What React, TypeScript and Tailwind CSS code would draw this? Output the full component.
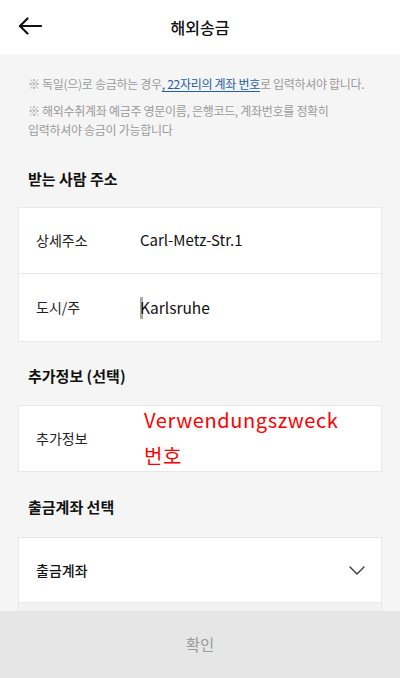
import React, { useState } from 'react';

const font = { fontFamily: '"Noto Sans CJK KR", "Noto Sans", sans-serif' };

const BackArrow: React.FC = () => (
  <svg width="24" height="18" viewBox="0 0 24 18" fill="none" stroke="#111" strokeWidth="2.2" strokeLinecap="round" strokeLinejoin="round">
    <path d="M23 9H2" />
    <path d="M9.5 1.5L2 9l7.5 7.5" />
  </svg>
);

const Chevron: React.FC = () => (
  <svg width="16" height="9" viewBox="0 0 16 9" fill="none" stroke="#333" strokeWidth="1.3" strokeLinecap="round" strokeLinejoin="round">
    <path d="M1 1l7 7 7-7" />
  </svg>
);

const App: React.FC = () => {
  const [street, setStreet] = useState('Carl-Metz-Str.1');
  const [city, setCity] = useState('Karlsruhe');

  return (
    <div className="flex flex-col w-[400px] h-[678px] overflow-hidden bg-[#f5f5f5]" style={font}>
      <header className="relative flex items-center justify-center h-[54px] shrink-0 bg-white">
        <button className="absolute left-[18px] top-[17px]">
          <BackArrow />
        </button>
        <h1 className="text-[16px] font-medium text-[#111] leading-none">해외송금</h1>
      </header>

      <main className="flex-1 overflow-hidden">
        <div className="px-[28px] pt-[20px] text-[12px] leading-[19px] text-[#9a9a9a] tracking-[-0.3px]">
          <p className="mb-[8px] whitespace-nowrap">
            ※ 독일(으)로 송금하는 경우
            <a href="#" className="text-[#1d5fa6] underline underline-offset-2">, 22자리의 계좌 번호</a>
            로 입력하셔야 합니다.
          </p>
          <p>
            ※ 해외수취계좌 예금주 영문이름, 은행코드, 계좌번호를 정확히
            <br />
            입력하셔야 송금이 가능합니다
          </p>
        </div>

        <h2 className="mt-[29px] px-[28px] text-[15px] leading-[22px] font-bold text-[#111]">받는 사람 주소</h2>
        <div className="mx-[18px] mt-[17px] bg-white border border-[#e8e8e8]">
          <div className="flex items-center h-[66px] border-b border-[#e8e8e8]">
            <span className="w-[121px] pl-[17px] text-[14px] text-[#222]">상세주소</span>
            <input
              value={street}
              onChange={(e) => setStreet(e.target.value)}
              className="flex-1 text-[15px] text-[#111] outline-none bg-transparent"
            />
          </div>
          <div className="flex items-center h-[67px]">
            <span className="w-[121px] pl-[17px] text-[14px] text-[#222]">도시/주</span>
            <div className="flex items-center flex-1">
              <span className="w-[3px] h-[22px] bg-[#aaa] -mr-[3px]" />
              <input
                value={city}
                onChange={(e) => setCity(e.target.value)}
                className="flex-1 text-[15.5px] text-[#111] outline-none bg-transparent"
              />
            </div>
          </div>
        </div>

        <h2 className="mt-[23px] px-[28px] text-[15px] leading-[22px] font-bold text-[#111]">추가정보 (선택)</h2>
        <div className="mx-[18px] mt-[18px] h-[67px] flex items-center bg-white border border-[#e8e8e8]">
          <span className="w-[125px] pl-[17px] text-[14px] text-[#222]">추가정보</span>
          <p className="text-[20px] leading-[36px] tracking-[0.6px] text-[#ff0000] -mt-[1px]">
            Verwendungszweck
            <br />
            번호
          </p>
        </div>

        <h2 className="mt-[24px] px-[28px] text-[15px] leading-[22px] font-bold text-[#111]">출금계좌 선택</h2>
        <div className="mx-[18px] mt-[19px] bg-white border border-[#e8e8e8]">
          <button className="flex items-center justify-between w-full h-[65px] pl-[17px] pr-[16px] border-b border-[#e8e8e8]">
            <span className="text-[14px] font-medium text-[#111]">출금계좌</span>
            <Chevron />
          </button>
          <div className="h-[20px] bg-[#f2f2f2]" />
        </div>
      </main>

      <button className="h-[67px] shrink-0 bg-[#e6e6e6] text-[15.5px] text-[#9a9a9a]">확인</button>
    </div>
  );
};

export default App;
